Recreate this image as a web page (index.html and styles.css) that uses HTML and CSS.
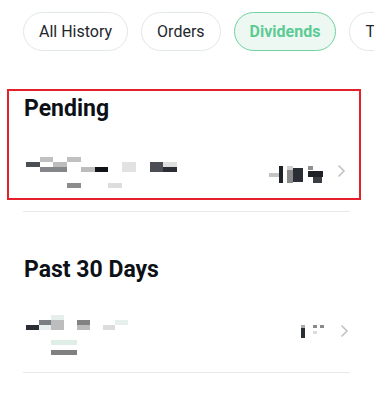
FILE: index.html
```html
<!doctype html>
<html>
<head>
<meta charset="utf-8">
<title>Dividends</title>
<link rel="stylesheet" href="styles.css">
</head>
<body>
<!-- 顶部筛选标签 -->
<div class="tabs">
	<div class="tab">All History</div>
	<div class="tab">Orders</div>
	<div class="tab current">Dividends</div>
	<div class="tab">Transfers</div>
</div>

<!-- Pending 区块（红框标注） -->
<div class="mark">
	<div class="title">Pending</div>
	<div class="row">
		<svg class="blur" width="156" height="34" viewBox="24 156 156 34">
			<rect x="26" y="162" width="14" height="5" fill="#4b4e53"/>
			<rect x="40" y="157" width="13" height="5" fill="#c0c0c0"/>
			<rect x="53" y="162" width="14" height="5" fill="#bdbdbd"/>
			<rect x="40" y="167" width="27" height="5" fill="#85868a"/>
			<rect x="67" y="157" width="14" height="5" fill="#c0c0c0"/>
			<rect x="81" y="167" width="14" height="5" fill="#bcbcbc"/>
			<rect x="95" y="167" width="13" height="5" fill="#101318"/>
			<rect x="122" y="162" width="14" height="10" fill="#e2e2e2"/>
			<rect x="150" y="162" width="13" height="10" fill="#4b4e55"/>
			<rect x="163" y="162" width="14" height="5" fill="#dedede"/>
			<rect x="163" y="167" width="14" height="5" fill="#2a2d33"/>
			<rect x="67" y="183" width="14" height="5" fill="#8c8c8c"/>
			<rect x="108" y="183" width="14" height="5" fill="#dddddd"/>
		</svg>
		<svg class="blur right" width="58" height="20" viewBox="268 164 58 20">
			<rect x="270" y="173" width="10" height="4" fill="#c4c4c4"/>
			<rect x="280" y="166" width="4" height="17" fill="#1f2227"/>
			<rect x="288" y="166" width="6" height="4" fill="#d0d0d0"/>
			<rect x="288" y="170" width="6" height="13" fill="#8a8a8a"/>
			<rect x="294" y="168" width="10" height="14" fill="#2b2e34"/>
			<rect x="309" y="166" width="5" height="4" fill="#909090"/>
			<rect x="309" y="171" width="15" height="6" fill="#1f2227"/>
			<rect x="314" y="177" width="9" height="6" fill="#3a3d42"/>
		</svg>
		<svg class="arrow" width="12" height="14" viewBox="0 0 12 14">
			<path d="M3.5 1.5 L9 7 L3.5 12.5" fill="none" stroke="#c2c2c2" stroke-width="1.6"/>
		</svg>
	</div>
</div>
<div class="line"></div>

<!-- Past 30 Days 区块 -->
<div class="section">
	<div class="title">Past 30 Days</div>
	<div class="row">
		<svg class="blur" width="110" height="42" viewBox="24 314 110 42">
			<rect x="26" y="325" width="13" height="5" fill="#2a2d33"/>
			<rect x="39" y="320" width="12" height="5" fill="#7a7d82"/>
			<rect x="39" y="325" width="12" height="5" fill="#e8eeee"/>
			<rect x="51" y="315" width="13" height="5" fill="#e6eeec"/>
			<rect x="51" y="320" width="13" height="10" fill="#bdbdbd"/>
			<rect x="77" y="320" width="13" height="5" fill="#828282"/>
			<rect x="77" y="325" width="13" height="5" fill="#bbbbbb"/>
			<rect x="103" y="325" width="12" height="5" fill="#dcdcdc"/>
			<rect x="115" y="320" width="13" height="5" fill="#e8f0ee"/>
			<rect x="51" y="340" width="26" height="5" fill="#e0eee8"/>
			<rect x="51" y="350" width="26" height="5" fill="#808080"/>
		</svg>
		<svg class="blur right2" width="28" height="16" viewBox="298 324 28 16">
			<rect x="299" y="325" width="4" height="3" fill="#aaaaaa"/>
			<rect x="299" y="328" width="4" height="10" fill="#2a2d33"/>
			<rect x="311" y="325" width="4" height="3" fill="#8a8a8a"/>
			<rect x="318" y="325" width="4" height="3" fill="#8a8a8a"/>
			<rect x="311" y="331" width="4" height="3" fill="#dcdcdc"/>
		</svg>
		<svg class="arrow arrow2" width="12" height="14" viewBox="0 0 12 14">
			<path d="M3.5 1.5 L9 7 L3.5 12.5" fill="none" stroke="#c2c2c2" stroke-width="1.6"/>
		</svg>
	</div>
</div>
<div class="line line2"></div>
</body>
</html>
```

FILE: styles.css
```css
*{
	margin:0;
	padding:0;
	box-sizing:border-box;
}
body{
	width:374px;
	overflow:hidden;
	background:#fff;
	font-family:Roboto,"Noto Sans",sans-serif;
	color:#1b1e22;
}
.tabs{
	display:flex;
	gap:13px;
	padding:12px 0 0 23px;
	white-space:nowrap;
	overflow:hidden;
}
.tab{
	flex:none;
	height:39px;
	line-height:37px;
	padding:0 15px;
	border:1px solid #e2e8e6;
	border-radius:20px;
	font-size:16px;
	color:#23262b;
}
.tab.current{
	background:#eef8f3;
	border-color:#6fd3a0;
	color:#5ccb94;
	font-weight:bold;
}
.mark{
	margin:38px 13px 0 7px;
	border:2px solid #e4202b;
	padding:4px 0 8px 15px;
}
.title{
	font-size:23px;
	line-height:28px;
	font-weight:bold;
	color:#0d1117;
}
.row{
	display:flex;
	align-items:flex-start;
	margin-top:33px;
	padding-right:12px;
}
.section .row{
	margin-top:30px;
	padding-right:0;
}
.blur{
	display:block;
}
.right{
	margin-left:auto;
	margin-top:8px;
}
.right2{
	margin-left:auto;
	margin-top:10px;
}
.arrow{
	display:block;
	margin-left:10px;
	margin-top:8px;
}
.arrow2{
	margin-top:10px;
	margin-left:10px;
}
.section{
	padding:44px 24px 0 24px;
}
.line{
	height:1px;
	background:#e8e8e8;
	margin:11px 24px 0 23px;
}
.line2{
	margin-top:16px;
}
```
